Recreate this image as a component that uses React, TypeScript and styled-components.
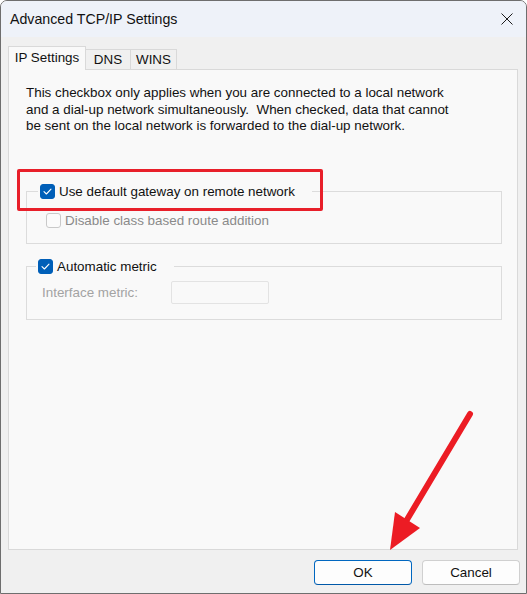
import styled, { createGlobalStyle } from "styled-components";

const GlobalStyle = createGlobalStyle`
  html, body {
    margin: 0;
    padding: 0;
    background: #ffffff;
  }
  body {
    font-family: "Liberation Sans", Arial, sans-serif;
    font-size: 13.4px;
    color: #1a1a1a;
  }
`;

function CheckBox({ checked, disabled }: { checked?: boolean; disabled?: boolean }) {
  return (
    <Box $checked={checked} $disabled={disabled}>
      {checked && (
        <svg width="15" height="15" viewBox="0 0 15 15">
          <path
            d="M4 7.6 L6.4 10 L11 5.2"
            fill="none"
            stroke="#ffffff"
            strokeWidth="1.1"
            strokeLinecap="round"
            strokeLinejoin="round"
          />
        </svg>
      )}
    </Box>
  );
}

function App() {
  return (
    <Screen>
      <GlobalStyle />
      <Window>
        <TitleBar>
          <Title>Advanced TCP/IP Settings</Title>
          <CloseIcon width="12" height="12" viewBox="0 0 12 12">
            <path d="M0.5 0.5 L11.5 11.5 M11.5 0.5 L0.5 11.5" stroke="#1c1c1c" strokeWidth="1" />
          </CloseIcon>
        </TitleBar>

        <TabStrip>
          <Tab $active $width={78}>IP Settings</Tab>
          <Tab $width={45}>DNS</Tab>
          <Tab $width={46}>WINS</Tab>
        </TabStrip>

        <Panel>
          <Description>
            <span>This checkbox only applies when you are connected to a local network</span>
            <span>and a dial-up network simultaneously.{"\u00a0 "}When checked, data that cannot</span>
            <span>be sent on the local network is forwarded to the dial-up network.</span>
          </Description>

          <Group $gap={49}>
            <Legend $offset={11}>
              <LegendInner>
                <CheckBox checked />
                <Label>Use default gateway on remote network</Label>
              </LegendInner>
            </Legend>
            <GroupBody $top={13} $left={19} $bottom={14}>
              <Row>
                <CheckBox disabled />
                <Label $muted>Disable class based route addition</Label>
              </Row>
            </GroupBody>
          </Group>

          <Group $gap={15}>
            <Legend $offset={9}>
              <LegendInner>
                <CheckBox checked />
                <Label>Automatic metric</Label>
              </LegendInner>
            </Legend>
            <GroupBody $top={6} $left={15} $bottom={15}>
              <Row>
                <FieldLabel>Interface metric:</FieldLabel>
                <MetricInput disabled />
              </Row>
            </GroupBody>
          </Group>
        </Panel>

        <Footer>
          <Button $primary>OK</Button>
          <Button>Cancel</Button>
        </Footer>
      </Window>

      <Highlight />
      <Arrow width="527" height="594" viewBox="0 0 527 594">
        <line x1="470" y1="414" x2="405" y2="523" stroke="#ec1c24" strokeWidth="6" strokeLinecap="round" />
        <polygon points="390,550 395,512 420,528" fill="#ec1c24" />
      </Arrow>
    </Screen>
  );
}

export default App;

const Screen = styled.div`
  position: relative;
  width: 527px;
  height: 594px;
  overflow: hidden;
`;

const Window = styled.div`
  box-sizing: border-box;
  width: 527px;
  height: 594px;
  display: flex;
  flex-direction: column;
  background: #f0f0f0;
  border: 1px solid #6e6e6e;
  border-radius: 7px 7px 0 0;
  overflow: hidden;
`;

const TitleBar = styled.div`
  height: 36px;
  flex-shrink: 0;
  display: flex;
  align-items: center;
  justify-content: space-between;
  padding: 0 13px 0 9px;
  background: #eef2f9;
`;

const Title = styled.div`
  font-size: 14.2px;
  color: #111111;
`;

const CloseIcon = styled.svg`
  display: block;
`;

const TabStrip = styled.div`
  display: flex;
  align-items: flex-end;
  height: 23px;
  margin-top: 9px;
  padding-left: 7px;
  flex-shrink: 0;
`;

const Tab = styled.div<{ $active?: boolean; $width: number }>`
  box-sizing: border-box;
  width: ${(p) => p.$width}px;
  height: ${(p) => (p.$active ? 24 : 20)}px;
  margin-bottom: ${(p) => (p.$active ? -1 : 0)}px;
  position: relative;
  z-index: ${(p) => (p.$active ? 1 : 0)};
  display: flex;
  align-items: center;
  justify-content: center;
  padding-bottom: ${(p) => (p.$active ? 2 : 0)}px;
  background: ${(p) => (p.$active ? "#f9f9f9" : "#f0f0f0")};
  border-top: 1px solid #d9d9d9;
  border-right: 1px solid #d9d9d9;
  border-left: ${(p) => (p.$active ? "1px solid #d9d9d9" : "none")};
  color: #111111;
`;

const Panel = styled.div`
  flex: 1;
  margin: 0 8px 0 7px;
  padding: 15px 0 0 17px;
  background: #f9f9f9;
  border: 1px solid #d9d9d9;
`;

const Description = styled.div`
  display: flex;
  flex-direction: column;
  line-height: 16.5px;
  color: #111111;

  span {
    white-space: nowrap;
  }
`;

const Group = styled.fieldset<{ $gap: number }>`
  box-sizing: border-box;
  width: 476px;
  min-width: 0;
  margin: ${(p) => p.$gap}px 0 0 0;
  padding: 0;
  border: 1px solid #dcdcdc;
`;

const Legend = styled.legend<{ $offset: number }>`
  margin-left: ${(p) => p.$offset}px;
  padding: 0 17px 0 2px;
  height: 16px;
  line-height: 16px;
`;

const LegendInner = styled.span`
  display: inline-flex;
  align-items: center;
  gap: 4px;
  height: 16px;
`;

const GroupBody = styled.div<{ $top: number; $left: number; $bottom: number }>`
  padding: ${(p) => p.$top}px 0 ${(p) => p.$bottom}px ${(p) => p.$left}px;
`;

const Row = styled.div`
  display: flex;
  align-items: center;
  gap: 4px;
`;

const Box = styled.span<{ $checked?: boolean; $disabled?: boolean }>`
  box-sizing: border-box;
  width: 15px;
  height: 15px;
  flex-shrink: 0;
  border-radius: 3px;
  display: inline-flex;
  background: ${(p) => (p.$checked ? "#005fb8" : "#fbfbfb")};
  border: 1px solid ${(p) => (p.$checked ? "#005fb8" : p.$disabled ? "#c9c9c9" : "#8a8a8a")};

  svg {
    margin: -1px;
  }
`;

const Label = styled.span<{ $muted?: boolean }>`
  color: ${(p) => (p.$muted ? "#8a8a8a" : "#111111")};
  white-space: nowrap;
  line-height: 16px;
`;

const FieldLabel = styled.span`
  width: 125px;
  color: #a3a3a3;
  white-space: nowrap;
`;

const MetricInput = styled.input`
  box-sizing: border-box;
  width: 98px;
  height: 23px;
  margin: 0;
  border: 1px solid #e3e3e3;
  border-radius: 2px;
  background: #f9f9f9;
`;

const Footer = styled.div`
  height: 43px;
  flex-shrink: 0;
  box-sizing: border-box;
  display: flex;
  justify-content: flex-end;
  align-items: flex-start;
  gap: 10px;
  padding: 10px 6px 0 0;
`;

const Button = styled.button<{ $primary?: boolean }>`
  box-sizing: border-box;
  width: 98px;
  height: 25px;
  margin: 0;
  padding: 0;
  font-family: "Liberation Sans", Arial, sans-serif;
  font-size: 13.4px;
  color: #111111;
  background: #fdfdfd;
  border: 1px solid ${(p) => (p.$primary ? "#0067c0" : "#d0d0d0")};
  border-bottom-color: ${(p) => (p.$primary ? "#0058a8" : "#bdbdbd")};
  border-radius: 4px;
`;

const Highlight = styled.div`
  position: absolute;
  left: 17px;
  top: 169px;
  width: 306px;
  height: 42px;
  box-sizing: border-box;
  border: 3px solid #e81f2a;
  border-radius: 2px;
  pointer-events: none;
`;

const Arrow = styled.svg`
  position: absolute;
  left: 0;
  top: 0;
  pointer-events: none;
`;
